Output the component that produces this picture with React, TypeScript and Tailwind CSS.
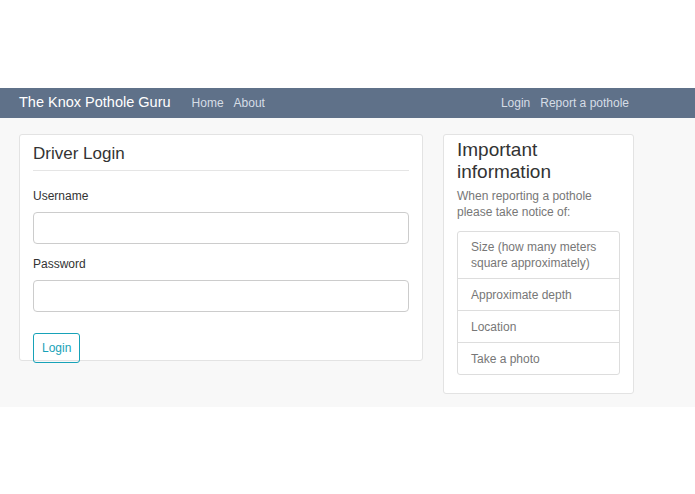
export default function App() {
  const f = { fontFamily: '"Liberation Sans", Arial, sans-serif' };
  return (
    <div style={f} className="w-[695px] h-[494px] bg-white text-[12px] text-[#333]">
      <div className="h-[88px]" />
      <div className="h-[30px] bg-[#5f7189] flex items-center">
        <span className="ml-[19px] text-[14.5px] text-white">The Knox Pothole Guru</span>
        <span className="ml-[21px] text-[#d6dde6]">Home</span>
        <span className="ml-[10px] text-[#d6dde6]">About</span>
        <span className="ml-auto text-[#d6dde6]">Login</span>
        <span className="ml-[10px] mr-[66px] text-[#d6dde6]">Report a pothole</span>
      </div>
      <div className="h-[289px] bg-[#f8f8f8] flex items-start pt-[16px] pl-[19px]">
        <div className="w-[404px] h-[227px] bg-white border border-[#e3e3e3] rounded-[3px] px-[13px] pt-[6px]">
          <div className="text-[17px] pb-[3px] border-b border-[#e5e5e5]">Driver Login</div>
          <div className="mt-[16px]">Username</div>
          <div className="mt-[7px] h-[32px] border border-[#ccc] rounded-[4px]" />
          <div className="mt-[11px]">Password</div>
          <div className="mt-[7px] h-[32px] border border-[#ccc] rounded-[4px]" />
          <div className="mt-[21px] inline-block border border-[#17a2b8] text-[#17a2b8] rounded-[3px] px-[8px] py-[5px]">Login</div>
        </div>
        <div className="ml-[20px] w-[191px] h-[260px] bg-white border border-[#e3e3e3] rounded-[3px] px-[13px] pt-[4px]">
          <div className="text-[19px] leading-[22px]">Important information</div>
          <div className="mt-[5px] text-[#777] leading-[16px]">When reporting a pothole please take notice of:</div>
          <div className="mt-[11px] border border-[#ddd] rounded-[3px] text-[#777]">
            <div className="px-[13px] py-[7px] leading-[16px] border-b border-[#ddd]">Size (how many meters square approximately)</div>
            <div className="px-[13px] h-[32px] flex items-center border-b border-[#ddd]">Approximate depth</div>
            <div className="px-[13px] h-[32px] flex items-center border-b border-[#ddd]">Location</div>
            <div className="px-[13px] h-[31px] flex items-center">Take a photo</div>
          </div>
        </div>
      </div>
    </div>
  );
}
